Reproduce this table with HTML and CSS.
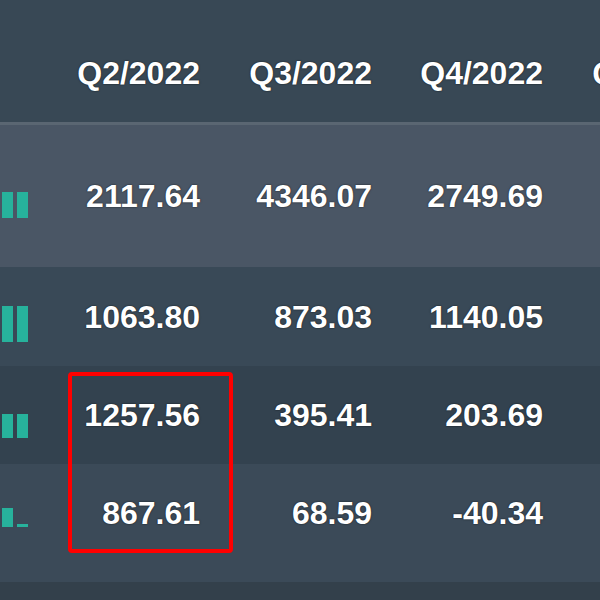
FILE: index.html
```html
<!DOCTYPE html>
<html>
<head>
<meta charset="utf-8">
<link rel="stylesheet" href="styles.css">
</head>
<body>
<div class="frame">
  <div class="table">
    <div class="row head">
      <div class="cell bars"></div>
      <div class="cell">Q2/2022</div>
      <div class="cell">Q3/2022</div>
      <div class="cell">Q4/2022</div>
      <div class="cell">Q1/2023</div>
    </div>
    <div class="row r1">
      <div class="cell bars"><span class="bar" style="height:26px"></span><span class="bar" style="height:26px"></span></div>
      <div class="cell">2117.64</div>
      <div class="cell">4346.07</div>
      <div class="cell">2749.69</div>
      <div class="cell"></div>
    </div>
    <div class="row r2">
      <div class="cell bars"><span class="bar" style="height:36px"></span><span class="bar" style="height:36px"></span></div>
      <div class="cell">1063.80</div>
      <div class="cell">873.03</div>
      <div class="cell">1140.05</div>
      <div class="cell"></div>
    </div>
    <div class="row r3">
      <div class="cell bars"><span class="bar" style="height:24px"></span><span class="bar" style="height:24px"></span></div>
      <div class="cell">1257.56</div>
      <div class="cell">395.41</div>
      <div class="cell">203.69</div>
      <div class="cell"></div>
    </div>
    <div class="row r4">
      <div class="cell bars"><span class="bar" style="height:19px"></span><span class="bar" style="height:3px"></span></div>
      <div class="cell">867.61</div>
      <div class="cell">68.59</div>
      <div class="cell">-40.34</div>
      <div class="cell"></div>
    </div>
    <div class="foot"></div>
  </div>
  <div class="highlight"></div>
</div>
</body>
</html>
```
FILE: styles.css
```css
html, body {
  margin: 0;
  padding: 0;
  background: #33404b;
}
.frame {
  position: relative;
  width: 600px;
  height: 600px;
  overflow: hidden;
  font-family: "Liberation Sans", Arial, sans-serif;
  font-weight: bold;
  font-size: 32px;
  color: #ffffff;
}
.table {
  display: flex;
  flex-direction: column;
  width: 715px;
  background-image:
    linear-gradient(to right, transparent 3px, rgba(255,255,255,0.10) 3px, rgba(255,255,255,0.10) 4px, transparent 4px, transparent 7px, rgba(255,255,255,0.08) 7px, rgba(255,255,255,0.08) 8px, transparent 8px);
}
.row {
  display: grid;
  grid-template-columns: 28px 172px 172px 171px 172px;
  align-items: center;
  box-sizing: border-box;
}
.cell {
  text-align: right;
  line-height: 36px;
  text-shadow: 0 0 2px rgba(0,0,0,0.55), 0 0 1px rgba(0,0,0,0.4);
  white-space: nowrap;
}
.head {
  height: 125px;
  padding-top: 24px;
  background: #384855;
  border-bottom: 3px solid #5a6672;
}
.r1 { height: 142px; padding-top: 0; background: #4a5665; }
.r2 { height: 99px; padding-top: 0; background: #394957; }
.r3 { height: 98px; padding-top: 0; background: #33424f; }
.r4 { height: 118px; padding-bottom: 20px; background: #3b4a58; }
.foot { height: 18px; background: #33404b; }
.bars {
  display: flex;
  justify-content: flex-end;
  align-items: flex-end;
  gap: 4px;
  align-self: stretch;
}
.r1 .bars { padding-bottom: 49px; }
.r2 .bars { padding-bottom: 24px; }
.r3 .bars { padding-bottom: 26px; }
.r4 .bars { padding-bottom: 35px; }
.bar {
  width: 11px;
  background: #27b29c;
  display: block;
}
.highlight {
  position: absolute;
  left: 68px;
  top: 372px;
  width: 157px;
  height: 173px;
  border: 4px solid #ff0000;
  border-radius: 4px;
}
```
